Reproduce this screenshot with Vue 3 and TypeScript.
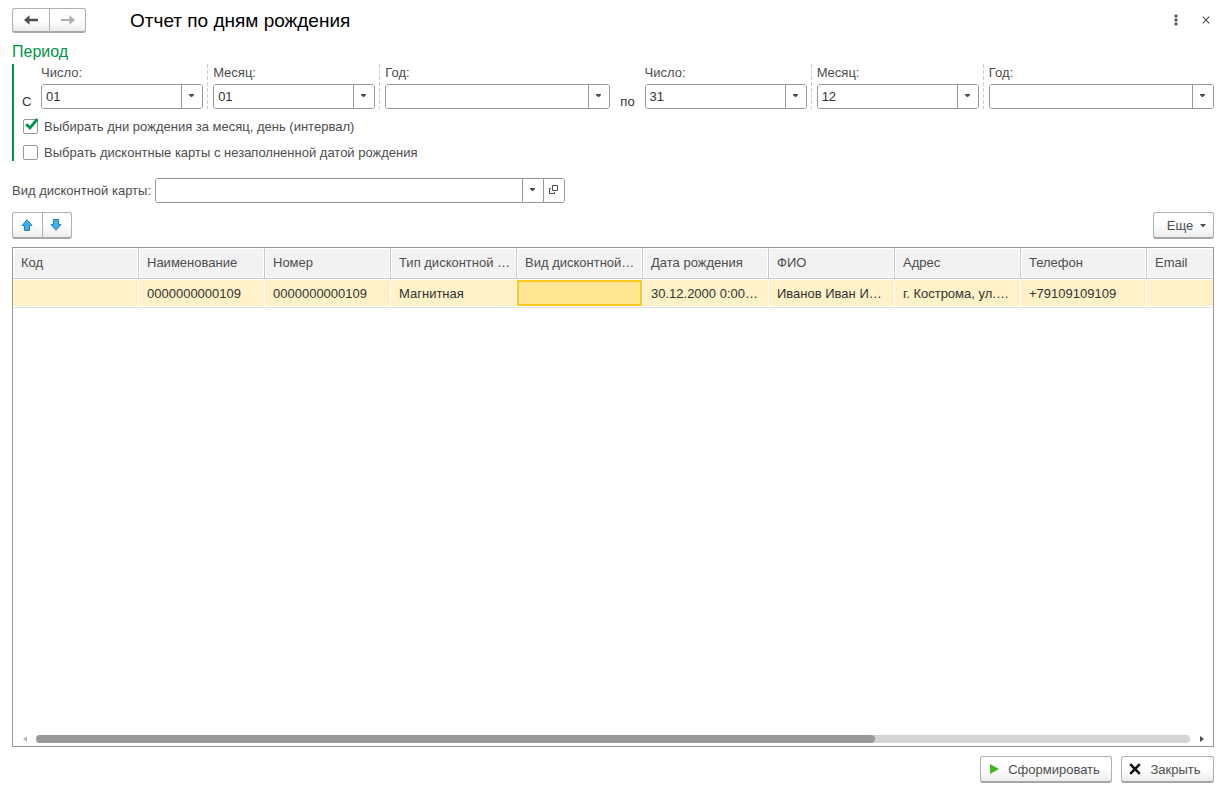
<script setup lang="ts">
import { ref } from 'vue'

interface PeriodField {
  id: string
  label: string
  value: string
  wide: boolean
}

interface Period {
  id: string
  caption: string
  fields: PeriodField[]
}

const periods = ref<Period[]>([
  {
    id: 'from',
    caption: 'С',
    fields: [
      { id: 'from-day', label: 'Число:', value: '01', wide: false },
      { id: 'from-month', label: 'Месяц:', value: '01', wide: false },
      { id: 'from-year', label: 'Год:', value: '', wide: true },
    ],
  },
  {
    id: 'to',
    caption: 'по',
    fields: [
      { id: 'to-day', label: 'Число:', value: '31', wide: false },
      { id: 'to-month', label: 'Месяц:', value: '12', wide: false },
      { id: 'to-year', label: 'Год:', value: '', wide: true },
    ],
  },
])

const byInterval = ref(true)
const withoutBirthDate = ref(false)
const cardKind = ref('')

const columns: string[] = [
  'Код', 'Наименование', 'Номер', 'Тип дисконтной …', 'Вид дисконтной…',
  'Дата рождения', 'ФИО', 'Адрес', 'Телефон', 'Email',
]
const rows: string[][] = [
  ['', '0000000000109', '0000000000109', 'Магнитная', '', '30.12.2000 0:00…',
    'Иванов Иван И…', 'г. Кострома, ул.…', '+79109109109', ''],
]
const activeCell = ref({ row: 0, column: 4 })
</script>

<template>
  <main class="page">
    <header class="header">
      <div class="button-group">
        <button type="button" class="btn nav" aria-label="Назад">
          <svg width="14" height="10" viewBox="0 0 14 10"><path d="M0 5 5.5 0.2V3.8H14V6.2H5.5V9.8Z" fill="#4d4d4d" /></svg>
        </button>
        <button type="button" class="btn nav" aria-label="Вперед">
          <svg width="14" height="10" viewBox="0 0 14 10"><path d="M14 5 8.5 0.2V4H0V6H8.5V9.8Z" fill="#b0b0b0" /></svg>
        </button>
      </div>
      <h1 class="title">Отчет по дням рождения</h1>
      <button type="button" class="plain" aria-label="Меню">
        <svg width="4" height="12" viewBox="0 0 4 12"><g fill="#555"><rect x="0.5" y="0.5" width="3" height="3" rx="1" /><rect x="0.5" y="4.5" width="3" height="3" rx="1" /><rect x="0.5" y="8.5" width="3" height="3" rx="1" /></g></svg>
      </button>
      <button type="button" class="plain" aria-label="Закрыть окно">
        <svg width="8" height="8" viewBox="0 0 8 8"><path d="M0.7 0.7 7.3 7.3M7.3 0.7 0.7 7.3" stroke="#555" stroke-width="1.2" /></svg>
      </button>
    </header>

    <section class="period" aria-labelledby="period-title">
      <h2 id="period-title" class="period-title">Период</h2>
      <div class="period-body">
        <div class="period-row">
          <template v-for="period in periods" :key="period.id">
            <span class="caption" :class="period.id">{{ period.caption }}</span>
            <div class="fields">
              <template v-for="(field, index) in period.fields" :key="field.id">
                <span v-if="index > 0" class="separator"></span>
                <div class="field" :class="{ wide: field.wide }">
                  <label :for="field.id">{{ field.label }}</label>
                  <div class="combo">
                    <input :id="field.id" v-model="field.value" type="text" />
                    <button type="button" :aria-label="'Выбрать: ' + field.label">
                      <svg width="5" height="3" viewBox="0 0 5 3"><path d="M0 0H5V1L3 3H2L0 1Z" fill="#4d4d4d" /></svg>
                    </button>
                  </div>
                </div>
              </template>
            </div>
          </template>
        </div>
        <label class="check">
          <input v-model="byInterval" type="checkbox" />
          <svg v-if="byInterval" class="tick" width="14" height="13" viewBox="0 0 14 13"><path d="M1.2 6.2 5 10 12.4 1" fill="none" stroke="#009646" stroke-width="2.8" /></svg>
          <span>Выбирать дни рождения за месяц, день (интервал)</span>
        </label>
        <label class="check">
          <input v-model="withoutBirthDate" type="checkbox" />
          <svg v-if="withoutBirthDate" class="tick" width="14" height="13" viewBox="0 0 14 13"><path d="M1.2 6.2 5 10 12.4 1" fill="none" stroke="#009646" stroke-width="2.8" /></svg>
          <span>Выбрать дисконтные карты с незаполненной датой рождения</span>
        </label>
      </div>
    </section>

    <div class="card-kind">
      <label for="card-kind">Вид дисконтной карты:</label>
      <div class="combo">
        <input id="card-kind" v-model="cardKind" type="text" />
        <button type="button" aria-label="Выбрать вид карты">
          <svg width="5" height="3" viewBox="0 0 5 3"><path d="M0 0H5V1L3 3H2L0 1Z" fill="#4d4d4d" /></svg>
        </button>
        <button type="button" aria-label="Открыть карту">
          <svg width="9" height="9" viewBox="0 0 9 9"><path d="M3.5 0.5H8.5V5.5H3.5ZM2 3.5H0.5V8.5H5.5V7" fill="none" stroke="#4d4d4d" /></svg>
        </button>
      </div>
    </div>

    <div class="toolbar">
      <div class="button-group">
        <button type="button" class="btn move" aria-label="Переместить вверх">
          <svg width="12" height="12" viewBox="0 0 12 12"><path d="M6 0.8 11 6.5H8.5V11.5H3.5V6.5H1Z" fill="#3fb0f0" stroke="#2b7cb0" /></svg>
        </button>
        <button type="button" class="btn move" aria-label="Переместить вниз">
          <svg width="12" height="12" viewBox="0 0 12 12"><path d="M6 11.2 11 5.5H8.5V0.5H3.5V5.5H1Z" fill="#3fb0f0" stroke="#2b7cb0" /></svg>
        </button>
      </div>
      <button type="button" class="btn more">
        <span>Еще</span>
        <svg width="6" height="3" viewBox="0 0 6 3"><path d="M0 0H6L3.5 3H2.5Z" fill="#4d4d4d" /></svg>
      </button>
    </div>

    <div class="grid">
      <div class="viewport">
        <table>
          <thead>
            <tr><th v-for="column in columns" :key="column" scope="col">{{ column }}</th></tr>
          </thead>
          <tbody>
            <tr v-for="(row, r) in rows" :key="r">
              <td
                v-for="(cell, c) in row"
                :key="c"
                :class="{ active: activeCell.row === r && activeCell.column === c }"
                @click="activeCell = { row: r, column: c }"
              >{{ cell }}</td>
            </tr>
          </tbody>
        </table>
      </div>
      <div class="scrollbar">
        <button type="button" class="plain" aria-label="Прокрутить влево">
          <svg width="4" height="6" viewBox="0 0 4 6"><path d="M4 0V6L0 3Z" fill="#b8b8b8" /></svg>
        </button>
        <div class="track"><div class="thumb"></div></div>
        <button type="button" class="plain" aria-label="Прокрутить вправо">
          <svg width="4" height="6" viewBox="0 0 4 6"><path d="M0 0V6L4 3Z" fill="#4d4d4d" /></svg>
        </button>
      </div>
    </div>

    <footer class="footer">
      <button type="button" class="btn action">
        <svg width="9" height="10" viewBox="0 0 9 10"><path d="M0 0 9 5 0 10Z" fill="#43b51b" /></svg>
        <span>Сформировать</span>
      </button>
      <button type="button" class="btn action close">
        <svg width="12" height="12" viewBox="0 0 12 12"><path d="M1.2 1.2 10.8 10.8M10.8 1.2 1.2 10.8" stroke="#111" stroke-width="2.6" /></svg>
        <span>Закрыть</span>
      </button>
    </footer>
  </main>
</template>

<style>
body {
  margin: 0;
  background: #fff;
}
</style>

<style scoped>
.page {
  box-sizing: border-box;
  display: flex;
  flex-direction: column;
  min-height: 100vh;
  padding: 8px 16px 10px 12px;
  color: #4d4d4d;
  font: 13px/16px "Liberation Sans", Arial, sans-serif;
}
.page * {
  box-sizing: border-box;
}
button,
input {
  margin: 0;
  padding: 0;
  color: inherit;
  font: inherit;
}
svg {
  display: block;
  flex: none;
}

.btn {
  display: flex;
  align-items: center;
  justify-content: center;
  height: 27px;
  border: 1px solid #b0b0b0;
  border-bottom: 2px solid #a6a6a6;
  border-radius: 3px;
  background: linear-gradient(#fff 50%, #ececec);
}
.btn span {
  padding-top: 2px;
}
.button-group {
  display: flex;
}
.button-group .btn:first-child {
  border-radius: 3px 0 0 3px;
}
.button-group .btn:last-child {
  border-left: 0;
  border-radius: 0 3px 3px 0;
}
.btn.nav {
  width: 38px;
  height: 25px;
}
.btn.nav:last-child {
  width: 36px;
}
.btn.move {
  width: 31px;
  padding-right: 2px;
}
.btn.move:last-child {
  width: 29px;
}
.plain {
  display: flex;
  align-items: center;
  justify-content: center;
  border: 0;
  background: none;
}

.header {
  display: flex;
  align-items: center;
  height: 25px;
}
.header .plain {
  width: 16px;
  height: 24px;
  padding-bottom: 2px;
  margin-left: 14px;
}
.title {
  flex: 1;
  margin: 0 0 0 44px;
  color: #000;
  font-size: 19px;
  font-weight: 400;
  line-height: 24px;
}

.period-title {
  margin: 9px 0 2px;
  color: #009646;
  font-size: 16px;
  font-weight: 400;
  line-height: 20px;
}
.period-body {
  height: 97px;
  border-left: 2px solid #009646;
  padding-left: 8px;
}
.period-row {
  display: flex;
  align-items: flex-end;
}
.caption {
  flex: none;
  width: 34px;
  color: #333;
  line-height: 14px;
  text-align: center;
}
.caption.from {
  width: 19px;
  text-align: left;
}
.fields {
  display: flex;
  flex: 1;
  min-width: 0;
}
.field {
  flex: 162 1 0;
  min-width: 0;
}
.field.wide {
  flex-grow: 225;
}
.field label {
  display: block;
  height: 20px;
  line-height: 18px;
}
.separator {
  flex: none;
  width: 1px;
  margin: 0 5px 0 4px;
  background: repeating-linear-gradient(#d0d0d0 0 4px, transparent 4px 6px);
}
.combo {
  display: flex;
  height: 25px;
  overflow: hidden;
  border: 1px solid #999;
  border-radius: 3px;
}
.combo input {
  flex: 1;
  min-width: 0;
  padding: 0 4px;
  border: 0;
  outline: 0;
  background: #fff;
  color: #333;
}
.combo button {
  display: flex;
  flex: none;
  align-items: center;
  justify-content: center;
  width: 21px;
  padding: 0 1px 2px 0;
  border: 0;
  border-left: 1px solid #999;
  background: #fff;
}
.check {
  display: flex;
  position: relative;
  align-items: center;
  width: fit-content;
  height: 26px;
}
.period-row + .check {
  margin-top: 4px;
}
.check span {
  padding-top: 2px;
}
.check input {
  width: 15px;
  height: 15px;
  margin: 0 6px 0 1px;
  border: 1px solid #999;
  border-radius: 2px;
  appearance: none;
}
.tick {
  position: absolute;
  top: 5px;
  left: 3px;
}

.card-kind {
  display: flex;
  align-items: center;
  margin-top: 17px;
}
.card-kind label {
  width: 143px;
}
.card-kind .combo {
  width: 410px;
}

.toolbar {
  display: flex;
  justify-content: space-between;
  margin: 9px 0 8px;
}
.more {
  gap: 7px;
  width: 61px;
  padding-left: 6px;
}

.grid {
  display: flex;
  flex: 1;
  flex-direction: column;
  border: 1px solid #999;
}
.viewport {
  flex: 1;
  overflow: hidden;
}
table {
  width: 1260px;
  table-layout: fixed;
  border-collapse: separate;
  border-spacing: 0;
}
th,
td {
  width: 126px;
  overflow: hidden;
  padding: 0 2px 0 8px;
  text-align: left;
  text-overflow: ellipsis;
  white-space: nowrap;
}
th {
  height: 31px;
  border-right: 1px solid #c8c8c8;
  border-bottom: 1px solid #c8c8c8;
  background: #f2f2f2;
  box-shadow: inset 0 0 0 1px #fff;
  font-weight: 400;
}
td {
  height: 29px;
  padding-top: 2px;
  border-right: 1px solid #fff;
  border-bottom: 1px solid #e4e4e4;
  background: #fff2c8;
  box-shadow: inset 0 1px #fff, inset 0 -1px #fff;
  color: #333;
}
td.active {
  background: #ffe591;
  box-shadow: inset 0 1px #fff, inset 0 -1px #fff, inset 0 0 0 3px #fbc91d;
}
td.active {
  box-shadow: inset 0 1px #fff, inset 0 -1px #fff, inset 2px 0 #fbc91d, inset -2px 0 #fbc91d, inset 0 3px #fbc91d, inset 0 -3px #fbc91d;
}
.scrollbar {
  display: flex;
  align-items: center;
  height: 15px;
}
.scrollbar .plain {
  width: 23px;
  height: 15px;
}
.track {
  flex: 1;
  height: 8px;
  border-radius: 4px;
  background: #d4d4d4;
}
.thumb {
  width: 72.7%;
  height: 8px;
  border-radius: 4px;
  background: #999;
}

.footer {
  display: flex;
  justify-content: flex-end;
  gap: 9px;
  margin-top: 9px;
}
.action {
  gap: 9px;
  width: 132px;
  padding-right: 2px;
}
.action.close {
  width: 93px;
  padding-right: 5px;
}
</style>
